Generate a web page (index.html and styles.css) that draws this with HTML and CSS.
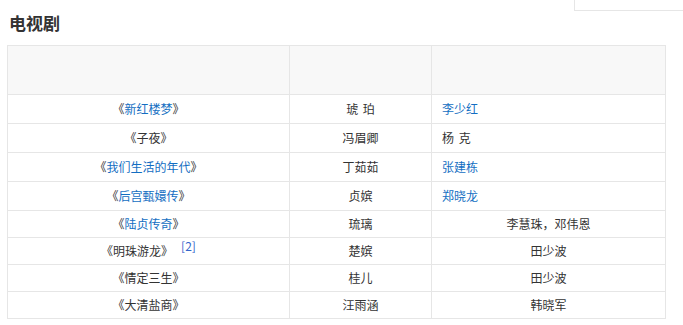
FILE: index.html
```html
<!DOCTYPE html>
<html lang="zh">
<head>
<meta charset="utf-8">
<link rel="stylesheet" href="styles.css">
</head>
<body>
<div class="topbar"><div class="searchbox"></div></div>
<h2 class="title">电视剧</h2>
<table class="drama">
  <colgroup><col class="c1"><col class="c2"><col class="c3"></colgroup>
  <tr class="head"><th></th><th></th><th></th></tr>
  <tr class="tall"><td>《<a>新红楼梦</a>》</td><td class="spaced">琥 珀</td><td class="left"><a>李少红</a></td></tr>
  <tr class="tall"><td>《子夜》</td><td>冯眉卿</td><td class="left spaced">杨 克</td></tr>
  <tr class="tall"><td>《<a>我们生活的年代</a>》</td><td>丁茹茹</td><td class="left"><a>张建栋</a></td></tr>
  <tr class="tall"><td>《<a>后宫甄嬛传</a>》</td><td>贞嫔</td><td class="left"><a>郑晓龙</a></td></tr>
  <tr><td>《<a>陆贞传奇</a>》</td><td>琉璃</td><td>李慧珠，邓伟恩</td></tr>
  <tr><td>《明珠游龙》<sup class="ref">[2]</sup></td><td>楚嫔</td><td>田少波</td></tr>
  <tr><td>《情定三生》</td><td>桂儿</td><td>田少波</td></tr>
  <tr><td>《大清盐商》</td><td>汪雨涵</td><td>韩晓军</td></tr>
</table>
</body>
</html>
```
FILE: styles.css
```css
html, body {
  margin: 0;
  padding: 0;
  background: #fff;
  font-family: "Microsoft YaHei", "Noto Sans CJK SC", "Noto Sans", sans-serif;
  color: #333;
  font-size: 12px;
}
.topbar {
  display: flex;
  justify-content: flex-end;
  height: 11px;
}
.searchbox {
  width: 108px;
  height: 10px;
  border-left: 1px solid #e6e6e6;
  border-bottom: 1px solid #e6e6e6;
}
.title {
  margin: 0 0 0 9px;
  font-size: 17px;
  font-weight: bold;
  line-height: 24px;
  height: 34px;
  color: #333;
}
.drama {
  margin-left: 7px;
  border-collapse: collapse;
  table-layout: fixed;
  width: 658px;
}
.c1 { width: 282px; }
.c2 { width: 142px; }
.c3 { width: 234px; }
.drama th, .drama td {
  border: 1px solid #e6e6e6;
  padding: 0;
  text-align: center;
  font-weight: normal;
  line-height: 16px;
}
.drama td.left {
  text-align: left;
  padding-left: 10px;
}
.drama td.spaced {
  word-spacing: 2px;
}
.head th {
  background: #f8f8f8;
  height: 48px;
}
.drama tr td { height: 26px; }
.drama tr.tall td { height: 28px; }
.drama a {
  color: #136ec2;
  text-decoration: none;
}
.ref {
  color: #3366cc;
  font-size: 12px;
  margin-left: 8px;
  vertical-align: 5px;
  line-height: 0;
}
```
